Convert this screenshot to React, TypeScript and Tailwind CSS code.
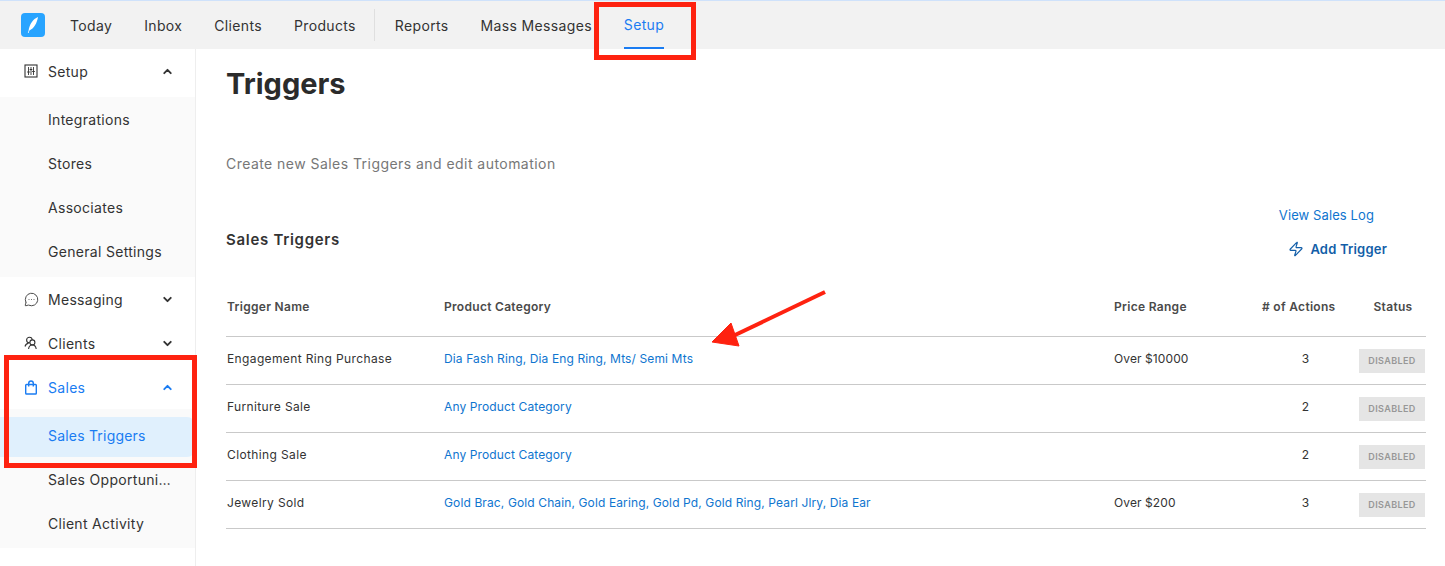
import { ChevronDown, ChevronUp, MessageCircleMore, Zap } from "lucide-react";
import type { ReactNode } from "react";

const navItems = ["Today", "Inbox", "Clients", "Products"];

const rows = [
  { name: "Engagement Ring Purchase", category: "Dia Fash Ring, Dia Eng Ring, Mts/ Semi Mts", price: "Over $10000", actions: 3 },
  { name: "Furniture Sale", category: "Any Product Category", price: "", actions: 2 },
  { name: "Clothing Sale", category: "Any Product Category", price: "", actions: 2 },
  { name: "Jewelry Sold", category: "Gold Brac, Gold Chain, Gold Earing, Gold Pd, Gold Ring, Pearl Jlry, Dia Ear", price: "Over $200", actions: 3 },
];

function SetupIcon() {
  return (
    <svg width="14" height="14" viewBox="0 0 14 14" fill="none" stroke="#333" strokeWidth="1.1">
      <rect x="1" y="1" width="12" height="12" />
      <path d="M4.5 3v8M9.5 3v8M7 3v8" strokeWidth="0.9" />
      <path d="M3.2 8h2.6M5.7 5.5h2.6M8.2 7.5h2.6" />
    </svg>
  );
}

function ClientsIcon() {
  return (
    <svg width="14" height="14" viewBox="0 0 14 14" fill="none" stroke="#333" strokeWidth="1.1">
      <circle cx="5.4" cy="4" r="2.8" />
      <circle cx="8.4" cy="6.4" r="2.5" fill="#fff" />
      <path d="M1 10.5c.5-2 2-3.2 3.6-3.4M4.6 13c.2-2.4 1.700-4 3.800-4s3.500 1.600 3.800 4" />
    </svg>
  );
}

function BagIcon() {
  return (
    <svg width="14" height="15" viewBox="0 0 14 15" fill="none" stroke="#1a7cf2" strokeWidth="1.4">
      <rect x="1.700" y="4.500" width="10.600" height="9.500" rx="0.8" />
      <path d="M4.700 6.500V3.200C4.700 2 5.700 1 7 1s2.300 1 2.300 2.200v3.300" />
    </svg>
  );
}

function SideGroup({ icon, label, open, active }: { icon: ReactNode; label: string; open?: boolean; active?: boolean }) {
  return (
    <div className={`flex h-11 items-center pl-6 pr-[21px] text-[14px] tracking-[0.3px] ${active ? "text-[#1a7cf2]" : "text-[#333]"}`}>
      <span className="flex w-6 shrink-0">{icon}</span>
      <span className="flex-1">{label}</span>
      {open ? <ChevronUp size={13} strokeWidth={3.5} /> : <ChevronDown size={13} strokeWidth={3.5} />}
    </div>
  );
}

function SideLink({ label }: { label: string }) {
  return (
    <div className="flex h-11 items-center pl-12 text-[14px] tracking-[0.3px] text-[#333]">
      <span className="truncate pr-[22px]">{label}</span>
    </div>
  );
}

export default function App() {
  return (
    <div className="relative h-[566px] w-[1445px] overflow-hidden bg-white font-['Inter',sans-serif]">
      <header className="flex h-[49px] items-center border-t border-[#cfe2fb] bg-[#f2f2f2] text-[14px] tracking-[0.35px] text-[#333]">
        <div className="ml-[21px] mr-[25px] flex h-6 w-6 items-center justify-center rounded-[4px] bg-[#28a4ff]">
          <svg width="14" height="18" viewBox="0 0 14 18" fill="#fff">
            <path d="M12 1C7 3 3.500 8 2.500 15L1.800 17l.8.1L3.400 14.500C8 12.500 11 7 12 1z" />
          </svg>
        </div>
        <nav className="flex h-full items-center">
          {navItems.map((item) => (
            <span key={item} className="mr-8">{item}</span>
          ))}
          <span className="-ml-[14px] mr-5 h-8 w-px bg-[#dfdfdf]" />
          <span className="mr-8">Reports</span>
          <span className="mr-8">Mass Messages</span>
          <span className="flex h-full w-10 items-center justify-center border-b-2 border-[#1a7cf2] text-[#1a7cf2]">Setup</span>
        </nav>
      </header>

      <div className="flex">
        <aside className="h-[517px] w-[196px] shrink-0 border-r border-[#eeeeee]">
          <div className="flex h-12 items-center pb-1 pl-6 pr-[21px] text-[14px] tracking-[0.3px] text-[#333]">
            <span className="flex w-6 shrink-0"><SetupIcon /></span>
            <span className="flex-1">Setup</span>
            <ChevronUp size={13} strokeWidth={3.5} />
          </div>
          <div className="bg-[#fafafa] pb-1">
            <SideLink label="Integrations" />
            <SideLink label="Stores" />
            <SideLink label="Associates" />
            <SideLink label="General Settings" />
          </div>
          <SideGroup icon={<MessageCircleMore size={15} strokeWidth={1.4} />} label="Messaging" />
          <SideGroup icon={<ClientsIcon />} label="Clients" />
          <SideGroup icon={<BagIcon />} label="Sales" open active />
          <div className="bg-[#fafafa] pt-2 pb-[3px]">
            <div className="flex h-10 items-center rounded-r-lg bg-[#e0f0fd] pb-1 pl-12 text-[14px] tracking-[0.2px] text-[#1a7cf2]">Sales Triggers</div>
            <SideLink label="Sales Opportunities" />
            <SideLink label="Client Activity" />
          </div>
        </aside>

        <main className="flex-1 pl-[30px] pr-[19px]">
          <h1 className="pt-[15px] text-[29px] leading-10 font-bold text-[#2b2b2b]">Triggers</h1>
          <p className="mt-[50px] text-[14px] leading-5 tracking-[0.45px] text-[#777]">Create new Sales Triggers and edit automation</p>

          <div className="mt-[31px] flex items-start justify-between">
            <h2 className="pt-[23px] text-[15px] leading-6 font-semibold tracking-[0.7px] text-[#333]">Sales Triggers</h2>
            <div className="flex flex-col items-end pr-[39px]">
              <a className="mr-[13px] text-[13px] leading-5 tracking-[0.1px] text-[#0f75cf]">View Sales Log</a>
              <a className="mt-[14px] flex items-center gap-[6px] text-[13px] leading-5 font-semibold tracking-[0.2px] text-[#125ea8]">
                <Zap size={16} strokeWidth={1.7} />
                Add Trigger
              </a>
            </div>
          </div>

          <table className="mt-[25px] w-full table-fixed text-[12px] text-[#333]">
            <thead>
              <tr className="h-[52px] border-b border-[#c9c9c9] text-left text-[12px] font-semibold tracking-[0.3px] text-[#4a4a4a]">
                <th className="w-[218px] pb-[5px] pl-px font-semibold">Trigger Name</th>
                <th className="pb-[5px] font-semibold">Product Category</th>
                <th className="w-[130px] pb-[5px] font-semibold">Price Range</th>
                <th className="w-[106px] pb-[5px] font-semibold">
                  <span className="block pl-[18px]"># of Actions</span>
                </th>
                <th className="w-[76px] pb-[5px] pl-[10px] text-center font-semibold">Status</th>
              </tr>
            </thead>
            <tbody>
              {rows.map((row) => (
                <tr key={row.name} className="h-12 border-b border-[#c9c9c9]">
                  <td className="pb-[2px] pl-px tracking-[0.37px]">{row.name}</td>
                  <td className="pb-[2px] tracking-[0.12px] text-[#0f75cf]">{row.category}</td>
                  <td className="pb-[2px] tracking-[0.1px]">{row.price}</td>
                  <td className="pb-[2px] pl-[17px] text-center">{row.actions}</td>
                  <td className="pr-px text-right">
                    <span className="mt-px inline-flex h-6 w-[66px] items-center justify-center bg-[#e5e5e5] text-[9px] font-semibold tracking-[0.4px] text-[#979797]">DISABLED</span>
                  </td>
                </tr>
              ))}
            </tbody>
          </table>
        </main>
      </div>

      {/* annotations drawn over the screenshot */}
      <div className="absolute top-[2px] left-[594px] h-[58px] w-[102px] border-[5px] border-[#fe2210]" />
      <div className="absolute top-[355px] left-[4px] h-[113px] w-[193px] border-[5px] border-[#fe2210]" />
      <svg className="absolute top-[285px] left-[705px]" width="130" height="70" viewBox="0 0 130 70">
        <path d="M120 7 28 51" stroke="#fe2210" strokeWidth="4" fill="none" />
        <path d="M7 57 26 38 34 61z" fill="#fe2210" stroke="#fe2210" strokeLinejoin="round" />
      </svg>
    </div>
  );
}
